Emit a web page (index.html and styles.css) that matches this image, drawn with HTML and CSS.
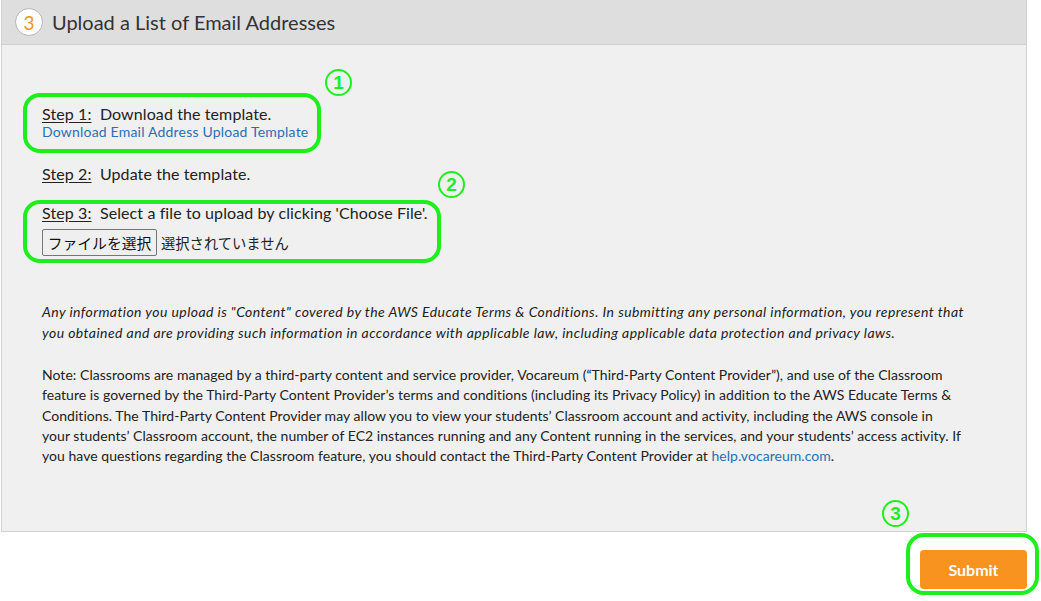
FILE: index.html
```html
<!DOCTYPE html>
<html lang="en">
<head>
<meta charset="utf-8">
<title>Upload a List of Email Addresses</title>
<link rel="stylesheet" href="styles.css">
</head>
<body>
<div class="page">
  <section class="panel">
    <header class="panel-head">
      <span class="badge">3</span>
      <h2 class="title">Upload a List of Email Addresses</h2>
    </header>
    <div class="panel-body">
      <div class="step">
        <p class="step-line"><span class="step-label">Step 1:</span>&nbsp; Download the template.</p>
        <a class="link tpl" href="#">Download Email Address Upload Template</a>
      </div>
      <div class="step step2">
        <p class="step-line"><span class="step-label">Step 2:</span>&nbsp; Update the template.</p>
      </div>
      <div class="step step3">
        <p class="step-line"><span class="step-label">Step 3:</span>&nbsp; Select a file to upload by clicking 'Choose File'.</p>
        <div class="file-row">
          <span class="file-btn">ファイルを選択</span>
          <span class="file-name">選択されていません</span>
        </div>
      </div>
      <p class="disclaimer">Any information you upload is "Content" covered by the AWS Educate Terms &amp; Conditions. In submitting any personal information, you represent that you obtained and are providing such information in accordance with applicable law, including applicable data protection and privacy laws.</p>
      <p class="note">Note: Classrooms are managed by a third-party content and service provider, Vocareum (“Third-Party Content Provider”), and use of the Classroom feature is governed by the Third-Party Content Provider’s terms and conditions (including its Privacy Policy) in addition to the AWS Educate Terms &amp; Conditions. The Third-Party Content Provider may allow you to view your students’ Classroom account and activity, including the AWS console in your students’ Classroom account, the number of EC2 instances running and any Content running in the services, and your students’ access activity. If you have questions regarding the Classroom feature, you should contact the Third-Party Content Provider at <a class="link" href="#">help.vocareum.com</a>.</p>
    </div>
  </section>
  <div class="actions">
    <button class="submit" type="button">Submit</button>
  </div>

  <div class="mark box1"></div>
  <div class="mark box2"></div>
  <div class="mark box3"></div>
  <span class="num num1">1</span>
  <span class="num num2">2</span>
  <span class="num num3">3</span>
</div>
</body>
</html>
```

FILE: styles.css
```css
html, body {
  margin: 0;
  padding: 0;
  background: #ffffff;
}
body {
  font-family: Lato, "Noto Sans CJK JP", sans-serif;
  color: #222;
}
.page {
  position: relative;
  width: 1041px;
  height: 601px;
  overflow: hidden;
}
.panel {
  margin-left: 1px;
  width: 1024px;
  border: 1px solid #d2d2d2;
  border-top: none;
  background: #f0f0f0;
}
.panel-head {
  display: flex;
  align-items: center;
  height: 44px;
  background: #dedede;
  border-bottom: 1px solid #cfcfcf;
  padding-left: 13px;
  gap: 9px;
}
.badge {
  width: 26px;
  height: 26px;
  border-radius: 50%;
  background: #fff;
  border: 1px solid #b5b5b5;
  display: flex;
  align-items: center;
  justify-content: center;
  color: #f7931e;
  font-size: 19px;
  line-height: 1;
}
.title {
  margin: 0;
  font-size: 20px;
  font-weight: 400;
  color: #333;
}
.panel-body {
  padding: 59px 63px 65px 40px;
}
.step-line {
  margin: 0;
  font-size: 16px;
  line-height: 20px;
  letter-spacing: 0.1px;
  color: #222;
}
.step-label {
  text-decoration: underline;
  text-underline-offset: 2px;
}
.link {
  color: #2a6fb5;
  text-decoration: none;
}
.tpl {
  display: block;
  font-size: 14px;
  line-height: 16px;
  letter-spacing: 0.2px;
}
.step2 {
  margin-top: 24px;
}
.step3 {
  margin-top: 19px;
}
.file-row {
  display: flex;
  align-items: center;
  margin-top: 6px;
  gap: 4px;
}
.file-btn {
  display: inline-flex;
  align-items: center;
  justify-content: center;
  box-sizing: border-box;
  width: 115px;
  height: 27px;
  background: #efefef;
  border: 1px solid #767676;
  border-radius: 2px;
  font-family: "Noto Sans CJK JP", sans-serif;
  font-size: 14.8px;
  color: #111;
}
.file-name {
  font-family: "Noto Sans CJK JP", sans-serif;
  font-size: 14.3px;
  color: #222;
}
.disclaimer {
  margin: 45px -12px 0 0;
  font-size: 14px;
  line-height: 21px;
  letter-spacing: 0.42px;
  font-style: italic;
  color: #222;
}
.note {
  margin: 22px 0 0;
  font-size: 14px;
  line-height: 20.3px;
  letter-spacing: 0.04px;
  color: #222;
}
.actions {
  display: flex;
  justify-content: flex-end;
  width: 1027px;
  margin-top: 18px;
}
.submit {
  width: 107px;
  height: 39px;
  border: none;
  border-radius: 4px;
  background: #f7931e;
  color: #fff;
  font-family: Lato, sans-serif;
  font-size: 16px;
  font-weight: 700;
}
.mark {
  position: absolute;
  box-sizing: border-box;
  border: 4px solid #1def1d;
  border-radius: 17px;
}
.box1 { left: 23px; top: 93px; width: 298px; height: 60px; }
.box2 { left: 23px; top: 200px; width: 418px; height: 63px; }
.box3 { left: 906px; top: 533px; width: 133px; height: 62px; border-radius: 18px; }
.num {
  position: absolute;
  box-sizing: border-box;
  width: 27px;
  height: 27px;
  border: 2.5px solid #1def1d;
  border-radius: 50%;
  display: flex;
  align-items: center;
  justify-content: center;
  font-family: "Liberation Sans", sans-serif;
  font-size: 19px;
  font-weight: 700;
  line-height: 1;
  color: #1def1d;
}
.num1 { left: 325px; top: 69px; }
.num2 { left: 438px; top: 171px; }
.num3 { left: 882px; top: 500px; }
```
